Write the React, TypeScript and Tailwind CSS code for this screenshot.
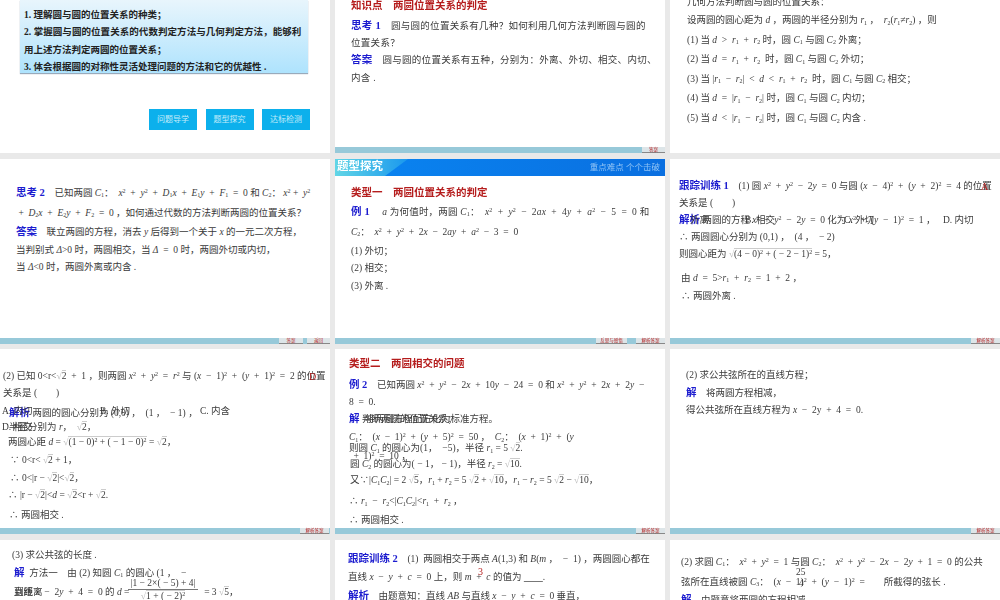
import React from "react";

type P = { children?: React.ReactNode; c?: string };

const L = ({ c = "", children }: P) => (
  <div className={`block h-[12px] leading-[12px] whitespace-pre shrink-0 ${c}`}>{children}</div>
);
const I = ({ children }: P) => <i>{children}</i>;
const Sb = ({ children }: P) => <sub className="text-[6px] leading-none">{children}</sub>;
const Sp = ({ children }: P) => <sup className="text-[6px] leading-none">{children}</sup>;
const B = ({ children }: P) => <b className="text-[#1c1ccf] text-[10.5px] font-bold">{children}</b>;
const R = ({ children }: P) => <b className="text-[#b51d1d] text-[10.5px] font-bold">{children}</b>;
const Rt = ({ children }: P) => (
  <span className="inline-flex items-end leading-[10px]">
    <span className="text-[#bbbbbb]">√</span>
    <span className="border-t border-[#cccccc]">{children}</span>
  </span>
);
const Over = ({ c = "", children }: P) => <span className={`absolute h-[12px] leading-[12px] whitespace-pre ${c}`}>{children}</span>;

const Tab = ({ c = "", children }: P) => (
  <span className={`h-full bg-[#dde5e8] border-b border-[#888888] text-[#b51d1d] text-[4.5px] leading-[5px] flex justify-center ${c}`}>{children}</span>
);

const Slide = ({ c = "", bar, children }: P & { bar?: React.ReactNode }) => (
  <div className="bg-white flex flex-col overflow-hidden relative">
    <div className={`relative flex-1 min-h-0 flex flex-col overflow-hidden ${c}`}>{children}</div>
    {bar !== undefined && <div className="h-[6px] shrink-0 bg-[#97c9d9] flex justify-end">{bar}</div>}
  </div>
);

export default function App() {
  return (
    <div className="w-[1000px] h-[600px] overflow-hidden bg-[#e9e9e9] text-[#3a3a3a] text-[9.5px] font-['Liberation_Serif','Noto_Sans_CJK_SC',serif]">
      <div className="grid grid-cols-[330px_330px_330px] grid-rows-[153px_185px_185px_185px] gap-x-[5px] gap-y-[5.5px] blur-[0.3px]">
        {/* Row 1 */}
        <Slide>
          <div className="ml-[20px] w-[288px] h-[73px] shrink-0 pl-[4px] bg-linear-to-b from-[#e8f5fc] to-[#aee3fd] shadow-[0_1px_1px_#9ab] font-bold text-[#222222]">
            <L c="mt-[8.5px]">1. 理解圆与圆的位置关系的种类；</L>
            <L c="mt-[5.5px] tracking-[0.06px]">2. 掌握圆与圆的位置关系的代数判定方法与几何判定方法，能够利</L>
            <L c="mt-[5.5px]">用上述方法判定两圆的位置关系；</L>
            <L c="mt-[5px]">3. 体会根据圆的对称性灵活处理问题的方法和它的优越性 .</L>
          </div>
          <div className="ml-[149px] mt-[36px] flex gap-x-[8.5px]">
            <span className="w-[48px] h-[21px] bg-[#0cb0ec] text-[#c4ecfa] text-[8px] flex items-center justify-center">问题导学</span>
            <span className="w-[48px] h-[21px] bg-[#0cb0ec] text-[#c4ecfa] text-[8px] flex items-center justify-center">题型探究</span>
            <span className="w-[48px] h-[21px] bg-[#0cb0ec] text-[#c4ecfa] text-[8px] flex items-center justify-center">达标检测</span>
          </div>
        </Slide>

        <Slide c="pl-[16px]" bar={<Tab c="w-[23px]">答案</Tab>}>
          <L><R>知识点　两圆位置关系的判定</R></L>
          <L c="mt-[8px] tracking-[0.3px]"><B>思考 1</B>　圆与圆的位置关系有几种？如何利用几何方法判断圆与圆的</L>
          <L c="mt-[5px] tracking-[0.3px]">位置关系？</L>
          <L c="mt-[5px] tracking-[0.3px]"><B>答案</B>　圆与圆的位置关系有五种，分别为：外离、外切、相交、内切、</L>
          <L c="mt-[6px] tracking-[0.3px]">内含 .</L>
        </Slide>

        <Slide c="pl-[17px]">
          <L c="mt-[-4px]">几何方法判断圆与圆的位置关系：</L>
          <L c="mt-[6px]">设两圆的圆心距为 <I>d</I> ，两圆的半径分别为 <I>r</I><Sb>1</Sb> ，  <I>r</I><Sb>2</Sb>(<I>r</I><Sb>1</Sb>≠<I>r</I><Sb>2</Sb>) ，则</L>
          <L c="mt-[7.5px]">(1) 当 <I>d</I>  &gt;  <I>r</I><Sb>1</Sb>  +  <I>r</I><Sb>2</Sb> 时，圆 <I>C</I><Sb>1</Sb> 与圆 <I>C</I><Sb>2</Sb> 外离；</L>
          <L c="mt-[7.5px]">(2) 当 <I>d</I>  =  <I>r</I><Sb>1</Sb>  +  <I>r</I><Sb>2</Sb>  时，圆 <I>C</I><Sb>1</Sb> 与圆 <I>C</I><Sb>2</Sb> 外切；</L>
          <L c="mt-[7.5px]">(3) 当 |<I>r</I><Sb>1</Sb>  −  <I>r</I><Sb>2</Sb>|  &lt;  <I>d</I>  &lt;  <I>r</I><Sb>1</Sb>  +  <I>r</I><Sb>2</Sb>  时，圆 <I>C</I><Sb>1</Sb> 与圆 <I>C</I><Sb>2</Sb> 相交；</L>
          <L c="mt-[7.5px]">(4) 当 <I>d</I>  =  |<I>r</I><Sb>1</Sb>  −  <I>r</I><Sb>2</Sb>| 时，圆 <I>C</I><Sb>1</Sb> 与圆 <I>C</I><Sb>2</Sb> 内切；</L>
          <L c="mt-[8px]">(5) 当 <I>d</I>  &lt;  |<I>r</I><Sb>1</Sb>  −  <I>r</I><Sb>2</Sb>| 时，圆 <I>C</I><Sb>1</Sb> 与圆 <I>C</I><Sb>2</Sb> 内含 .</L>
        </Slide>

        {/* Row 2 */}
        <Slide c="pl-[16px]" bar={<div className="flex gap-x-[4px] h-full"><Tab c="w-[24px]">答案</Tab><Tab c="w-[23px]">返回</Tab></div>}>
          <L c="mt-[28px]"><B>思考 2</B>　已知两圆 <I>C</I><Sb>1</Sb>：  <I>x</I><Sp>2</Sp>  +  <I>y</I><Sp>2</Sp>  +  <I>D</I><Sb>1</Sb><I>x</I>  +  <I>E</I><Sb>1</Sb><I>y</I>  +  <I>F</I><Sb>1</Sb>  =  0 和 <I>C</I><Sb>2</Sb>： <I>x</I><Sp>2</Sp> +  <I>y</I><Sp>2</Sp></L>
          <L c="mt-[8px]"> +  <I>D</I><Sb>2</Sb><I>x</I>  +  <I>E</I><Sb>2</Sb><I>y</I>  +  <I>F</I><Sb>2</Sb>  =  0 ，如何通过代数的方法判断两圆的位置关系？</L>
          <L c="mt-[7px]"><B>答案</B>　联立两圆的方程，消去 <I>y</I> 后得到一个关于 <I>x</I> 的一元二次方程，</L>
          <L c="mt-[6px]">当判别式 <I>Δ</I>&gt;0 时，两圆相交，当 <I>Δ</I>  =  0 时，两圆外切或内切，</L>
          <L c="mt-[5px]">当 <I>Δ</I>&lt;0 时，两圆外离或内含 .</L>
        </Slide>

        <Slide bar={<div className="flex gap-x-[9px] h-full"><Tab c="w-[31px]">反思与感悟</Tab><Tab c="w-[29px]">解析答案</Tab></div>}>
          <div className="h-[17px] shrink-0 relative bg-linear-to-r from-[#0a86f2] to-[#0a6fe0] flex items-center justify-between pl-[2px] pr-[5px]">
            <svg className="absolute left-0 top-0" width="75" height="17" viewBox="0 0 75 17">
              <defs>
                <linearGradient id="hd" x1="0" x2="1" y1="0" y2="0">
                  <stop offset="0" stopColor="#62d6e6" />
                  <stop offset="1" stopColor="#1a98ee" />
                </linearGradient>
              </defs>
              <polygon points="0,0 73,0 50,17 0,17" fill="url(#hd)" />
            </svg>
            <b className="relative text-white text-[11.5px] leading-none tracking-[0px]">题型探究</b>
            <span className="relative text-[#8fc3f5] text-[8.5px] leading-none">重点难点  个个击破</span>
          </div>
          <div className="pl-[16px] flex flex-col">
            <L c="mt-[11px]"><R>类型一　两圆位置关系的判定</R></L>
            <L c="mt-[7px] tracking-[0.2px]"><B>例 1</B>　 <I>a</I> 为何值时，两圆 <I>C</I><Sb>1</Sb>：  <I>x</I><Sp>2</Sp>  +  <I>y</I><Sp>2</Sp>  −  2<I>ax</I>  +  4<I>y</I>  +  <I>a</I><Sp>2</Sp>  −  5  =  0 和</L>
            <L c="mt-[8px]"><I>C</I><Sb>2</Sb>：  <I>x</I><Sp>2</Sp>  +  <I>y</I><Sp>2</Sp>  +  2<I>x</I>  −  2<I>ay</I>  +  <I>a</I><Sp>2</Sp>  −  3  =  0</L>
            <L c="mt-[7px]">(1) 外切；</L>
            <L c="mt-[5px]">(2) 相交；</L>
            <L c="mt-[6px]">(3) 外离 .</L>
          </div>
        </Slide>

        <Slide c="pl-[9px]" bar={<Tab c="w-[29px]">解析答案</Tab>}>
          <Over c="left-[311px] top-[22px] text-[#b51d1d] text-[10px]">A</Over>
          <Over c="left-[20px] top-[55px]">外离</Over>
          <Over c="left-[75px] top-[55px]">B. 相交</Over>
          <Over c="left-[174px] top-[55px]">C. 外切</Over>
          <Over c="left-[273px] top-[55px]">D. 内切</Over>
          <L c="mt-[21px]"><B>跟踪训练 1</B>　(1) 圆 <I>x</I><Sp>2</Sp>  +  <I>y</I><Sp>2</Sp>  −  2<I>y</I>  =  0 与圆 (<I>x</I>  −  4)<Sp>2</Sp>  +  (<I>y</I>  +  2)<Sp>2</Sp>  =  4 的位置</L>
          <L c="mt-[5px]">关系是 (　　)</L>
          <L c="mt-[5px]"><B>解析</B> 两圆的方程 <I>x</I><Sp>2</Sp>  +  <I>y</I><Sp>2</Sp>  −  2<I>y</I>  =  0 化为 <I>x</I><Sp>2</Sp>  +  (<I>y</I>  −  1)<Sp>2</Sp>  =  1 ，</L>
          <L c="mt-[5px]">∴ 两圆圆心分别为 (0,1) ，  (4 ，  − 2)</L>
          <L c="mt-[5px]">则圆心距为 <Rt>(4 − 0)<Sp>2</Sp> + ( − 2 − 1)<Sp>2</Sp></Rt> = 5，</L>
          <L c="mt-[12px] ml-[2px]">由 <I>d</I>  =  5&gt;<I>r</I><Sb>1</Sb>  +  <I>r</I><Sb>2</Sb>  =  1  +  2 ，</L>
          <L c="mt-[6px] ml-[2px]">∴ 两圆外离 .</L>
        </Slide>

        {/* Row 3 */}
        <Slide c="pl-[3px]" bar={<Tab c="w-[29px] mr-[1px]">解析答案</Tab>}>
          <Over c="left-[309px] top-[22px] text-[#b51d1d] text-[10px]">D</Over>
          <Over c="left-[2px] top-[56px]">A. 内切</Over>
          <Over c="left-[100px] top-[56px]">B. 外切</Over>
          <Over c="left-[200px] top-[56px]">C. 内含</Over>
          <Over c="left-[2px] top-[72px]">D. 相交</Over>
          <L c="mt-[21px]">(2) 已知 0&lt;r&lt;<Rt>2</Rt>  +  1 ，则两圆 <I>x</I><Sp>2</Sp>  +  <I>y</I><Sp>2</Sp>  =  <I>r</I><Sp>2</Sp> 与 (<I>x</I>  −  1)<Sp>2</Sp>  +  (<I>y</I>  +  1)<Sp>2</Sp>  =  2 的位置</L>
          <L c="mt-[5px]">关系是 (　　)</L>
          <L c="mt-[8px]"><span className="ml-[6px]"><B>解析</B></span> 两圆的圆心分别为 (0,0) ，  (1 ，  − 1) ，</L>
          <L c="mt-[2px] ml-[6px]">半径分别为 <I>r</I>，  <Rt>2</Rt>，</L>
          <L c="mt-[3px] ml-[5px]">两圆心距 <I>d</I> = <Rt>(1 − 0)<Sp>2</Sp> + ( − 1 − 0)<Sp>2</Sp></Rt> = <Rt>2</Rt>，</L>
          <L c="mt-[6px] ml-[7px]">∵ 0&lt;r&lt; <Rt>2</Rt> + 1，</L>
          <L c="mt-[6px] ml-[7px]">∴ 0&lt;|r − <Rt>2</Rt>|&lt;<Rt>2</Rt>，</L>
          <L c="mt-[5px] ml-[5px]">∴ |r − <Rt>2</Rt>|&lt;<I>d</I> = <Rt>2</Rt>&lt;r + <Rt>2</Rt>.</L>
          <L c="mt-[8px] ml-[6px]">∴ 两圆相交 .</L>
        </Slide>

        <Slide c="pl-[14px]" bar={<Tab c="w-[29px]">解析答案</Tab>}>
          <Over c="left-[30px] top-[64px]">将两圆方程配方化为标准方程。</Over>
          <Over c="left-[16px] top-[101px]"> +  1)<Sp>2</Sp>  =  10 ，</Over>
          <L c="mt-[9px]"><R>类型二　两圆相交的问题</R></L>
          <L c="mt-[9px]"><B>例 2</B>　已知两圆 <I>x</I><Sp>2</Sp>  +  <I>y</I><Sp>2</Sp>  −  2<I>x</I>  +  10<I>y</I>  −  24  =  0 和 <I>x</I><Sp>2</Sp>  +  <I>y</I><Sp>2</Sp>  +  2<I>x</I>  +  2<I>y</I>  −</L>
          <L c="mt-[5px]">8  =  0.</L>
          <L c="mt-[5px]"><B>解</B> 判断两圆的位置关系；</L>
          <L c="mt-[6px]"><I>C</I><Sb>1</Sb>：  (<I>x</I>  −  1)<Sp>2</Sp>  +  (<I>y</I>  +  5)<Sp>2</Sp>  =  50 ，  <I>C</I><Sb>2</Sb>：  (<I>x</I>  +  1)<Sp>2</Sp>  +  (<I>y</I></L>
          <L c="mt-[-1px]">则圆 <I>C</I><Sb>1</Sb> 的圆心为(1，  −5)，半径 <I>r</I><Sb>1</Sb> = 5 <Rt>2</Rt>.</L>
          <L c="mt-[4px] ml-[1px]">圆 <I>C</I><Sb>2</Sb> 的圆心为( − 1， − 1)，半径 <I>r</I><Sb>2</Sb> = <Rt>10</Rt>.</L>
          <L c="mt-[4px] ml-[1px]">又∵|<I>C</I><Sb>1</Sb><I>C</I><Sb>2</Sb>| = 2 <Rt>5</Rt>，<I>r</I><Sb>1</Sb> + <I>r</I><Sb>2</Sb> = 5 <Rt>2</Rt> + <Rt>10</Rt>，<I>r</I><Sb>1</Sb> − <I>r</I><Sb>2</Sb> = 5 <Rt>2</Rt> − <Rt>10</Rt>，</L>
          <L c="mt-[9px]">∴ <I>r</I><Sb>1</Sb>  −  <I>r</I><Sb>2</Sb>&lt;|<I>C</I><Sb>1</Sb><I>C</I><Sb>2</Sb>|&lt;<I>r</I><Sb>1</Sb>  +  <I>r</I><Sb>2</Sb> ，</L>
          <L c="mt-[7px]">∴ 两圆相交 .</L>
        </Slide>

        <Slide c="pl-[16px]" bar={<Tab c="w-[29px]">解析答案</Tab>}>
          <L c="mt-[20px]">(2) 求公共弦所在的直线方程；</L>
          <L c="mt-[6px]"><B>解</B>　将两圆方程相减，</L>
          <L c="mt-[5px]">得公共弦所在直线方程为 <I>x</I>  −  2y  +  4  =  0.</L>
        </Slide>

        {/* Row 4 */}
        <Slide c="pl-[12px]">
          <Over c="left-[14px] top-[46px]">到距离</Over>
          <span className="absolute left-[128px] top-[37px] flex flex-col items-center w-[70px] whitespace-pre">
            <span className="border-b border-[#777777] leading-[12px] w-full text-center">|1 − 2×( − 5) + 4|</span>
            <span className="leading-[12px]"><Rt>1 + ( − 2)<Sp>2</Sp></Rt></span>
          </span>
          <L c="mt-[9px]">(3) 求公共弦的长度 .</L>
          <L c="mt-[6px] ml-[2px]"><B>解</B>  方法一　由 (2) 知圆 <I>C</I><Sb>1</Sb> 的圆心 (1 ，  −</L>
          <L c="mt-[7px] ml-[2px]">直线 <I>x</I>  −  2<I>y</I>  +  4  =  0 的 <I>d</I> = <span className="inline-block w-[70px]"></span> = 3 <Rt>5</Rt>，</L>
        </Slide>

        <Slide c="pl-[13px]">
          <Over c="left-[143px] top-[26px] text-[#b51d1d] text-[10px]">3</Over>
          <L c="mt-[13px]"><B>跟踪训练 2</B>　(1)  两圆相交于两点 <I>A</I>(1,3) 和 <I>B</I>(<I>m</I> ，  −  1) ，两圆圆心都在</L>
          <L c="mt-[6px]">直线 <I>x</I>  −  <I>y</I>  +  <I>c</I>  =  0 上，则 <I>m</I>  +  <I>c</I> 的值为 <span className="underline decoration-[#777777]">　　</span>.</L>
          <L c="mt-[7px]"><B>解析</B>　由题意知：直线 <I>AB</I> 与直线 <I>x</I>  −  <I>y</I>  +  <I>c</I>  =  0 垂直，</L>
        </Slide>

        <Slide c="pl-[11px]">
          <Over c="left-[126px] top-[26px]">25</Over>
          <Over c="left-[129px] top-[37px]">4</Over>
          <L c="mt-[16px]">(2) 求圆 <I>C</I><Sb>1</Sb>：  <I>x</I><Sp>2</Sp>  +  <I>y</I><Sp>2</Sp>  =  1 与圆 <I>C</I><Sb>2</Sb>：  <I>x</I><Sp>2</Sp>  +  <I>y</I><Sp>2</Sp>  −  2<I>x</I>  −  2<I>y</I>  +  1  =  0 的公共</L>
          <L c="mt-[8px]">弦所在直线被圆 <I>C</I><Sb>3</Sb>：  (<I>x</I>  −  1)<Sp>2</Sp>  +  (<I>y</I>  −  1)<Sp>2</Sp>  =　　所截得的弦长 .</L>
          <L c="mt-[6px]"><B>解</B>　由题意将两圆的方程相减，</L>
        </Slide>
      </div>
    </div>
  );
}
